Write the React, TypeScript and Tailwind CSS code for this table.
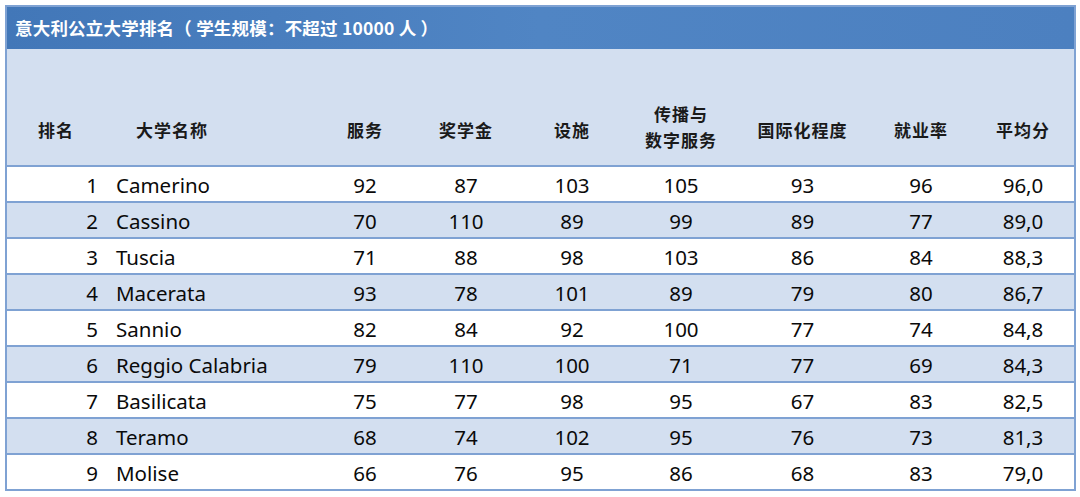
import React from "react"

const cols = "grid grid-cols-[98px_210px_100px_102px_110px_108px_135px_102px_102px]"

const rows: [number, string, number, number, number, number, number, number, string][] = [
  [1, "Camerino", 92, 87, 103, 105, 93, 96, "96,0"],
  [2, "Cassino", 70, 110, 89, 99, 89, 77, "89,0"],
  [3, "Tuscia", 71, 88, 98, 103, 86, 84, "88,3"],
  [4, "Macerata", 93, 78, 101, 89, 79, 80, "86,7"],
  [5, "Sannio", 82, 84, 92, 100, 77, 74, "84,8"],
  [6, "Reggio Calabria", 79, 110, 100, 71, 77, 69, "84,3"],
  [7, "Basilicata", 75, 77, 98, 95, 67, 83, "82,5"],
  [8, "Teramo", 68, 74, 102, 95, 76, 73, "81,3"],
  [9, "Molise", 66, 76, 95, 86, 68, 83, "79,0"],
]

export default function App() {
  return (
    <div className="w-[1080px] h-[497px] bg-white pt-[5px] pl-[5px]">
      <div className="w-[1071px] border-2 border-[#7fa2d3] [font-family:'Noto_Sans','Noto_Sans_CJK_SC',sans-serif]">
        <div className="h-[42px] flex items-center pl-[8px] bg-gradient-to-r from-[#4277b8] via-[#5085c4] to-[#4c80c0] text-white font-bold text-[17.5px] [font-family:'Noto_Sans_CJK_SC',sans-serif] tracking-[0.2px]">
          意大利公立大学排名（ 学生规模：不超过 10000 人 ）
        </div>
        <div className={`${cols} h-[116px] bg-[#d3dff0] items-end pb-[20px] text-[17px] font-bold text-[#1a1a1a] [font-family:'Noto_Sans_CJK_SC',sans-serif] tracking-[1px]`}>
          <div className="text-center leading-[30px]">排名</div>
          <div className="pl-[31px] leading-[30px]">大学名称</div>
          <div className="text-center leading-[30px]">服务</div>
          <div className="text-center leading-[30px]">奖学金</div>
          <div className="text-center leading-[30px]">设施</div>
          <div className="text-center leading-[26px] -mb-[8px]">传播与<br />数字服务</div>
          <div className="text-center leading-[30px]">国际化程度</div>
          <div className="text-center leading-[30px]">就业率</div>
          <div className="text-center leading-[30px]">平均分</div>
        </div>
        {rows.map((r, i) => (
          <div
            key={r[0]}
            className={`${cols} h-[36px] border-t-2 border-[#7fa2d3] items-center pt-[2px] text-[20.5px] leading-[28px] text-[#0a0a0a] ${i % 2 === 1 ? "bg-[#d3dff0]" : "bg-white"}`}
          >
            <div className="text-right pr-[7px]">{r[0]}</div>
            <div className="pl-[11px]">{r[1]}</div>
            {r.slice(2).map((v, j) => (
              <div key={j} className="text-center">{v}</div>
            ))}
          </div>
        ))}
      </div>
    </div>
  )
}
